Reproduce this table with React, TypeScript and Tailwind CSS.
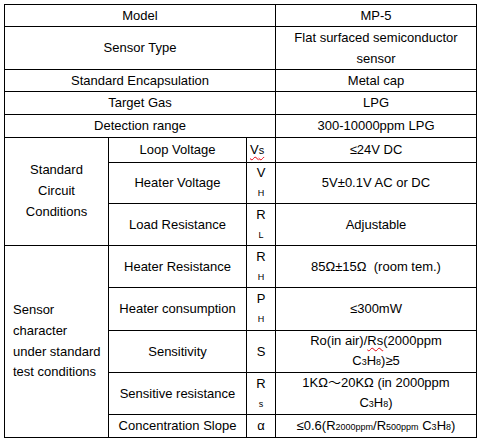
export default function App() {
  const cell = "border border-black text-center align-middle p-0";
  const sub = "text-[9px]";

  return (
    <div className="w-[480px] h-[442px] bg-white pt-[4px] pl-[4px] font-['Liberation_Sans','Noto_Sans_CJK_SC',sans-serif] text-[13px] leading-[20px] text-black">
      <table className="table-fixed border-collapse w-[472px]">
        <colgroup>
          <col className="w-[104px]" />
          <col className="w-[138px]" />
          <col className="w-[29px]" />
          <col className="w-[201px]" />
        </colgroup>
        <tbody>
          <tr className="h-[22px]">
            <td colSpan={3} className={cell}>Model</td>
            <td className={cell}>MP-5</td>
          </tr>
          <tr className="h-[43px]">
            <td colSpan={3} className={cell}>Sensor Type</td>
            <td className={`${cell} leading-[21px]`}>
              Flat surfaced semiconductor
              <br />
              sensor
            </td>
          </tr>
          <tr className="h-[22px]">
            <td colSpan={3} className={cell}>Standard Encapsulation</td>
            <td className={cell}>Metal cap</td>
          </tr>
          <tr className="h-[23px]">
            <td colSpan={3} className={cell}>Target Gas</td>
            <td className={cell}>LPG</td>
          </tr>
          <tr className="h-[23px]">
            <td colSpan={3} className={cell}>Detection range</td>
            <td className={cell}>300-10000ppm LPG</td>
          </tr>

          {/* Standard circuit conditions */}
          <tr className="h-[25px]">
            <td rowSpan={3} className={`${cell} leading-[20.7px]`}>
              Standard
              <br />
              Circuit
              <br />
              Conditions
            </td>
            <td className={cell}>Loop Voltage</td>
            <td className={`${cell} !text-left pl-[3px]`}>
              <span className="underline decoration-wavy decoration-red-600 underline-offset-2 decoration-1">
                V<span className="text-[11px]">s</span>
              </span>
            </td>
            <td className={cell}>≤24V DC</td>
          </tr>
          <tr className="h-[41px]">
            <td className={cell}>Heater Voltage</td>
            <td className={cell}>
              <div>V</div>
              <div className={sub}>H</div>
            </td>
            <td className={cell}>5V±0.1V AC or DC</td>
          </tr>
          <tr className="h-[42px]">
            <td className={cell}>Load Resistance</td>
            <td className={cell}>
              <div>R</div>
              <div className={sub}>L</div>
            </td>
            <td className={cell}>Adjustable</td>
          </tr>

          {/* Sensor character */}
          <tr className="h-[42px]">
            <td rowSpan={5} className={`${cell} !text-left pl-[8px] leading-[20.7px]`}>
              Sensor
              <br />
              character
              <br />
              under standard
              <br />
              test conditions
            </td>
            <td className={cell}>Heater Resistance</td>
            <td className={cell}>
              <div>R</div>
              <div className={sub}>H</div>
            </td>
            <td className={cell}>85Ω±15Ω&nbsp; (room tem.)</td>
          </tr>
          <tr className="h-[43px]">
            <td className={cell}>Heater consumption</td>
            <td className={cell}>
              <div>P</div>
              <div className={sub}>H</div>
            </td>
            <td className={cell}>≤300mW</td>
          </tr>
          <tr className="h-[42px]">
            <td className={cell}>Sensitivity</td>
            <td className={cell}>S</td>
            <td className={cell}>
              Ro(in air)/
              <span className="underline decoration-wavy decoration-red-600 underline-offset-2 decoration-1">Rs</span>
              (2000ppm
              <br />
              C<span className={sub}>3</span>H<span className={sub}>8</span>)≥5
            </td>
          </tr>
          <tr className="h-[42px]">
            <td className={cell}>Sensitive resistance</td>
            <td className={cell}>
              <div>R</div>
              <div className={sub}>s</div>
            </td>
            <td className={cell}>
              1KΩ～20KΩ (in 2000ppm
              <br />
              C<span className={sub}>3</span>H<span className={sub}>8</span>)
            </td>
          </tr>
          <tr className="h-[23px]">
            <td className={cell}>Concentration Slope</td>
            <td className={cell}>α</td>
            <td className={cell}>
              ≤0.6(R<span className={sub}>2000ppm</span>/R<span className={sub}>500ppm</span> C
              <span className={sub}>3</span>H<span className={sub}>8</span>)
            </td>
          </tr>
        </tbody>
      </table>
    </div>
  );
}
